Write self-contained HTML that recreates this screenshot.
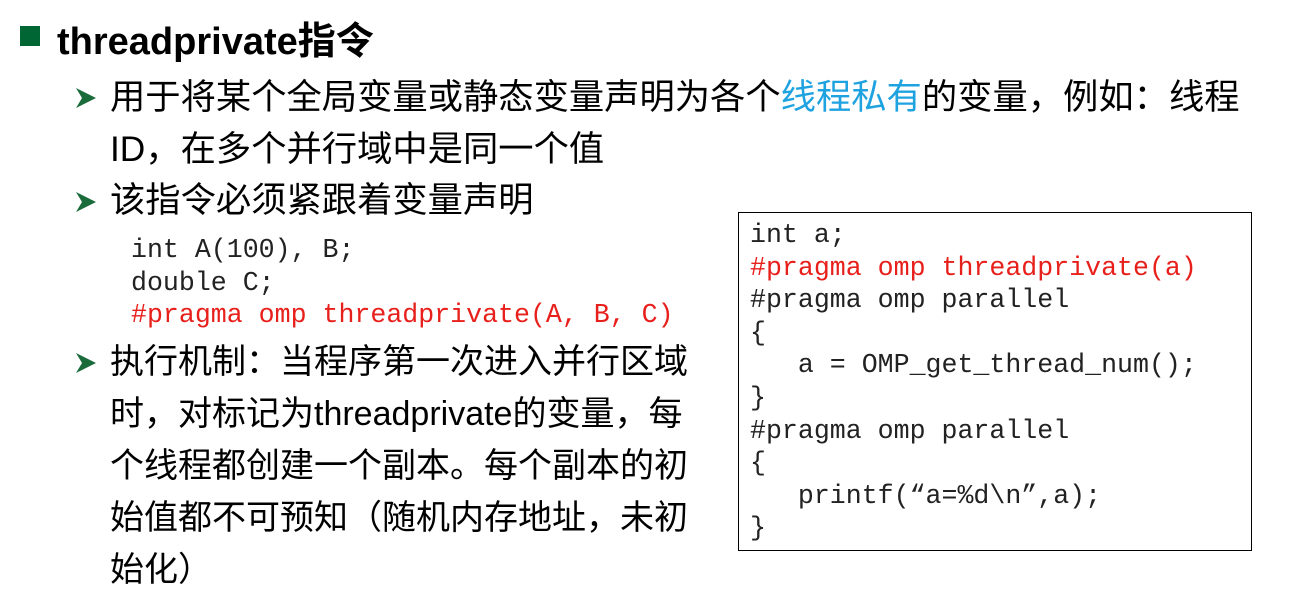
<!DOCTYPE html>
<html><head><meta charset="utf-8"><style>
body{margin:0;width:1290px;height:585px;background:#fff;position:relative;overflow:hidden;font-family:"Liberation Sans","Noto Sans CJK SC",sans-serif;color:#000}
.a{position:absolute;white-space:nowrap}
.t{font-size:38px;font-weight:bold;left:57px;top:10px}
.sq{position:absolute;left:20px;top:26px;width:20px;height:20px;background:#006633}
.txt{font-size:35.3px;line-height:52px}
.mono{font-family:"Liberation Mono",monospace;font-size:26.6px;line-height:32.6px}
.r{color:#e8201c}
.box{position:absolute;left:738px;top:212px;width:512px;height:337px;border:1.5px solid #000}
</style></head><body>
<div class="sq"></div>
<div class="a t">threadprivate指令</div>
<svg class="a" style="left:75px;top:86px" width="22" height="24" viewBox="0 0 22 24"><path d="M1 2 L21 12 L1 22 L7 12 Z" fill="#1a6b3a"/></svg>
<div class="a txt" style="left:110px;top:72px">用于将某个全局变量或静态变量声明为各个<span style="color:#1fa2e0">线程私有</span>的变量，例如：线程<br>ID，在多个并行域中是同一个值</div>
<svg class="a" style="left:75px;top:190px" width="22" height="24" viewBox="0 0 22 24"><path d="M1 2 L21 12 L1 22 L7 12 Z" fill="#1a6b3a"/></svg>
<div class="a txt" style="left:110px;top:175px">该指令必须紧跟着变量声明</div>
<div class="a mono" style="left:131px;top:234px;color:#222">int A(100), B;<br>double C;<br><span class="r">#pragma omp threadprivate(A, B, C)</span></div>
<svg class="a" style="left:75px;top:351px" width="22" height="24" viewBox="0 0 22 24"><path d="M1 2 L21 12 L1 22 L7 12 Z" fill="#1a6b3a"/></svg>
<div class="a txt" style="left:110px;top:336px;font-size:34px">执行机制：当程序第一次进入并行区域<br>时，对标记为threadprivate的变量，每<br>个线程都创建一个副本。每个副本的初<br>始值都不可预知（随机内存地址，未初<br>始化）</div>
<div class="box"></div>
<div class="a mono" style="left:750px;top:219px;color:#222">int a;<br><span class="r">#pragma omp threadprivate(a)</span><br>#pragma omp parallel<br>{<br>&nbsp;&nbsp; a = OMP_get_thread_num();<br>}<br>#pragma omp parallel<br>{<br>&nbsp;&nbsp; printf(“a=%d\n”,a);<br>}</div>
</body></html>
